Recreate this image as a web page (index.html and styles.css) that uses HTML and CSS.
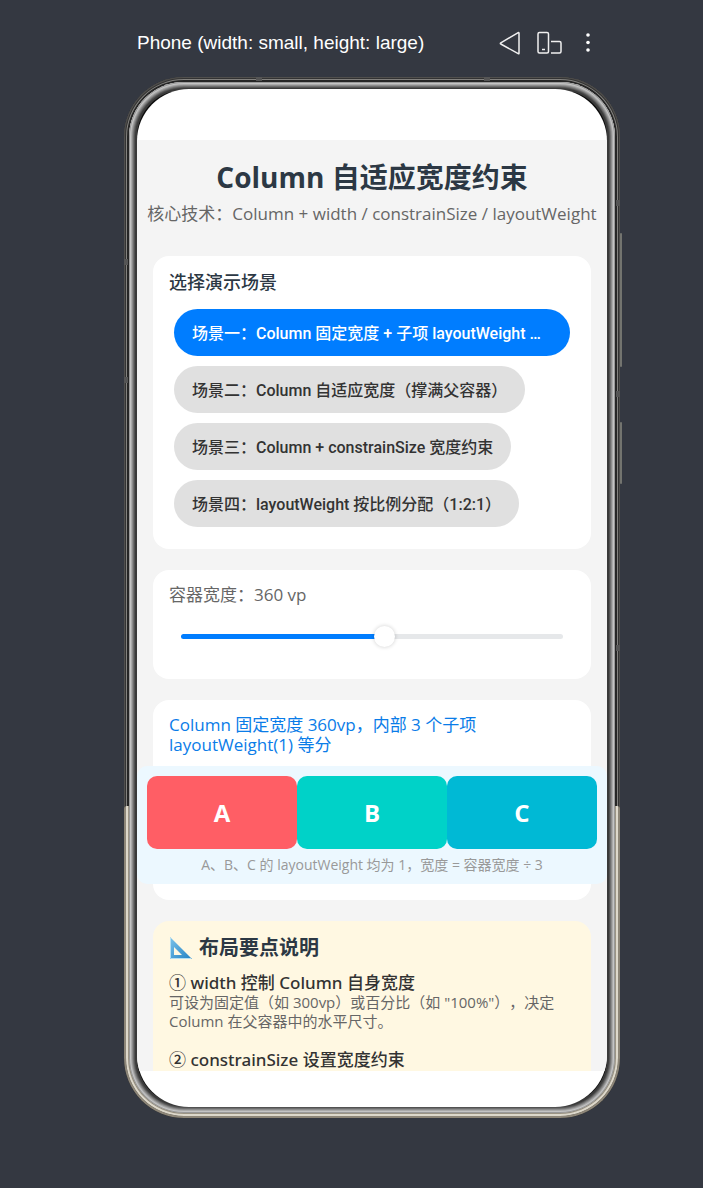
FILE: index.html
```
<!DOCTYPE html>
<html lang="zh-CN">
<head>
    <meta charset="UTF-8">
    <meta name="viewport" content="width=device-width, initial-scale=1.0">
    <title>Column 自适应宽度约束</title>
    <link rel="stylesheet" href="styles.css">
</head>
<body>
    <div class="previewer">
        <header class="toolbar">
            <span class="device-name">Phone (width: small, height: large)</span>
            <button type="button" class="tool" aria-label="Back">
                <svg width="22" height="24" viewBox="0 0 22 24"><path d="M20 2.200v20q0 .9-.8.5L1.800 13q-.9-.6 0-1.200L19.200 1.700q.8-.4.8.5z"/></svg>
            </button>
            <button type="button" class="tool" aria-label="Rotate">
                <svg width="26" height="24" viewBox="0 0 26 24"><rect x="1" y="1.500" width="10.500" height="20.500" rx="1.500"/><path d="M5 18.500h3M14 10.500h8.500q1.500 0 1.500 1.500v8.500q0 1.500-1.500 1.500H14"/></svg>
            </button>
            <button type="button" class="tool" aria-label="More">
                <svg class="dots" width="6" height="24" viewBox="0 0 6 24"><circle cx="3" cy="4" r="1.800"/><circle cx="3" cy="11.500" r="1.800"/><circle cx="3" cy="19" r="1.800"/></svg>
            </button>
        </header>

        <div class="phone">
            <span class="side-key volume"></span>
            <span class="side-key power"></span>
            <span class="antennas"></span>
            <div class="screen">
                <main class="app">
                    <h1>Column 自适应宽度约束</h1>
                    <p class="subtitle">核心技术：Column + width / constrainSize / layoutWeight</p>

                    <section class="card scenes">
                        <h2>选择演示场景</h2>
                        <div class="scene-list">
                            <button type="button" class="scene active">场景一：Column 固定宽度 + 子项 layoutWeight 等分宽度</button>
                            <button type="button" class="scene">场景二：Column 自适应宽度（撑满父容器）</button>
                            <button type="button" class="scene">场景三：Column + constrainSize 宽度约束</button>
                            <button type="button" class="scene">场景四：layoutWeight 按比例分配（1:2:1）</button>
                        </div>
                    </section>

                    <section class="card width-card">
                        <label for="boxWidth">容器宽度：360 vp</label>
                        <input type="range" id="boxWidth" min="200" max="500" value="360">
                    </section>

                    <section class="card demo">
                        <p class="demo-text">Column 固定宽度 360vp，内部 3 个子项 layoutWeight(1) 等分</p>
                        <div class="demo-box">
                            <div class="blocks">
                                <div class="block red">A</div>
                                <div class="block green">B</div>
                                <div class="block blue">C</div>
                            </div>
                            <p class="caption">A、B、C 的 layoutWeight 均为 1，宽度 = 容器宽度 ÷ 3</p>
                        </div>
                    </section>

                    <section class="card notes">
                        <h2>
                            <svg width="24" height="24" viewBox="0 0 24 24"><defs><linearGradient id="ruler" x1="0" y1="0" x2="1" y2="1"><stop offset="0" stop-color="#7cc3ea"/><stop offset="1" stop-color="#2382c4"/></linearGradient></defs><path fill="url(#ruler)" fill-rule="evenodd" d="M1 1v22h22zM5 11l8 8H5z"/><path stroke="#b5dff3" d="M1.500 2v20.500H22" fill="none"/></svg>
                            布局要点说明
                        </h2>
                        <h3>① width 控制 Column 自身宽度</h3>
                        <p>可设为固定值（如 300vp）或百分比（如 "100%"），决定 Column 在父容器中的水平尺寸。</p>
                        <h3>② constrainSize 设置宽度约束</h3>
                    </section>
                </main>
            </div>
        </div>
    </div>
</body>
</html>
```
FILE: styles.css
```
* {
    box-sizing: border-box;
}
body {
    margin: 0;
    height: 100vh;
    padding-left: 41px;
    background: #343841;
    font-family: "Open Sans", "Noto Sans CJK SC", sans-serif;
    text-spacing-trim: space-all;
    color: #333;
}
h1, h2, h3, p {
    margin: 0;
}
button {
    font-family: inherit;
    border: none;
    cursor: pointer;
}
.previewer {
    display: flex;
    flex-direction: column;
    height: 100%;
    max-width: 496px;
    margin: 0 auto;
    padding: 30px 0 70px;
}

/* Toolbar */
.toolbar {
    display: flex;
    align-items: center;
    height: 26px;
    margin-bottom: 21px;
    padding: 0 29px 0 13px;
    gap: 16px;
    color: #fff;
    font: 19px "Liberation Sans", Arial, sans-serif;
}
.device-name {
    flex: 1;
    white-space: nowrap;
}
.tool {
    display: flex;
    padding: 0;
    background: none;
}
.tool svg {
    fill: none;
    stroke: #f0f0f0;
    stroke-width: 1.5;
}
.tool:last-child {
    margin-left: 6px;
}
.tool .dots {
    fill: #fff;
    stroke: none;
}

/* Phone frame */
.phone {
    position: relative;
    flex: 1;
    min-height: 0;
    padding: 12px 13px 11px;
    border-radius: 60px;
    background: #0c0c0c;
    box-shadow: inset 0 0 0 1px #504f4d, inset 0 0 0 2px #333, inset 0 0 0 3px #83827f, inset 0 0 0 5px #262626;
}
.phone::before {
    content: "";
    position: absolute;
    inset: 5px;
    border-radius: 55px;
    box-shadow: inset 0 0 0 1px #999, inset 0 0 0 2px #c4c4c4, inset 0 0 0 3px #aaa, inset 0 0 0 4px #8c8c8c, inset 0 0 0 5px #6e6e6e, inset 0 0 0 6px #525252, inset 0 0 0 8px #3a3a3a;
}
.phone::after {
    content: "";
    position: absolute;
    inset: 726px 0 0;
    border: 2px solid #8d8678;
    border-top: none;
    border-radius: 0 0 60px 60px;
    box-shadow: inset 0 0 0 2px #ddd8cb, inset 0 0 0 3px #9b9484;
    clip-path: inset(3px 0 0 round 3px 3px 60px 60px);
}
.side-key {
    position: absolute;
    right: -2px;
    width: 2px;
    background: #73746f;
    border-radius: 1px;
}
.volume {
    top: 156px;
    height: 134px;
}
.power {
    top: 345px;
    height: 62px;
}
.antennas {
    position: absolute;
    inset: 0;
    background:
        linear-gradient(#555, #555) 132px 0 / 6px 4px,
        linear-gradient(#555, #555) 360px 0 / 6px 4px,
        linear-gradient(#555, #555) 0 182px / 4px 6px,
        linear-gradient(#555, #555) 0 300px / 4px 6px,
        linear-gradient(#555, #555) right 0 top 123px / 4px 6px,
        linear-gradient(#555, #555) right 0 top 314px / 4px 6px,
        linear-gradient(#555, #555) right 0 top 568px / 4px 6px;
    background-repeat: no-repeat;
}
.screen {
    position: relative;
    z-index: 1;
    display: flex;
    height: 100%;
    padding: 51px 0 36px;
    overflow: hidden;
    background: #fff;
    border-radius: 52px;
}

/* App page */
.app {
    flex: 1;
    min-width: 0;
    padding: 16px;
    background: #f4f4f4;
    overflow: hidden;
}
h1 {
    font-size: 28px;
    line-height: 42px;
    text-align: center;
    color: #2c3844;
}
.subtitle {
    margin: 0 -16px 26px;
    font-size: 17px;
    line-height: 32px;
    text-align: center;
    white-space: nowrap;
    color: #666;
}
.card {
    margin-bottom: 21px;
    padding: 16px;
    background: #fff;
    border-radius: 16px;
}
.scenes {
    padding-bottom: 22px;
}
.scenes h2 {
    margin-bottom: 16px;
    font-size: 18px;
    font-weight: 500;
    line-height: 21px;
    color: #2c3844;
}
.scene-list {
    display: flex;
    flex-direction: column;
    align-items: flex-start;
    gap: 10px;
    padding: 0 5px;
}
.scene {
    max-width: 100%;
    height: 47px;
    padding: 0 18px 2px;
    overflow: hidden;
    border-radius: 24px;
    background: #e0e0e0;
    color: #333;
    font-family: Roboto, "Noto Sans CJK SC", sans-serif;
    font-size: 16px;
    font-weight: 500;
    white-space: nowrap;
    text-overflow: ellipsis;
}
.scene.active {
    background: #007dff;
    color: #fff;
}

/* Width slider */
.width-card {
    height: 109px;
    padding-top: 15px;
}
.width-card label {
    display: block;
    margin-bottom: 21px;
    font-size: 17px;
    line-height: 20px;
    color: #666;
}
.width-card input {
    -webkit-appearance: none;
    appearance: none;
    display: block;
    width: calc(100% - 24px);
    height: 21px;
    margin: 0 12px;
    background: none;
}
.width-card input::-webkit-slider-runnable-track {
    height: 5px;
    border-radius: 3px;
    background: linear-gradient(to right, #007dff 53%, #e6e8ea 53%);
}
.width-card input::-webkit-slider-thumb {
    -webkit-appearance: none;
    width: 21px;
    height: 21px;
    margin-top: -8px;
    border-radius: 50%;
    background: #fff;
    box-shadow: 0 0 4px rgba(0,0,0,0.2);
}

/* Demo */
.demo {
    padding-top: 15px;
}
.demo-text {
    margin-bottom: 11px;
    font-size: 17px;
    line-height: 20px;
    color: #0a7ce8;
}
.demo-box {
    margin: 0 -32px;
    padding: 10px 10px 9px;
    background: #ecf8ff;
    border-radius: 10px;
}
.blocks {
    display: flex;
}
.block {
    flex: 1;
    border-radius: 10px;
    color: #fff;
    font-size: 24px;
    font-weight: bold;
    line-height: 73px;
    text-align: center;
}
.red {
    background: #ff5e65;
}
.green {
    background: #00d2c8;
}
.blue {
    background: #00b9d5;
}
.caption {
    margin-top: 6px;
    font-size: 14px;
    line-height: 20px;
    text-align: center;
    color: #999;
}

/* Notes */
.notes {
    margin-bottom: 0;
    padding-top: 15px;
    background: #fff8e2;
}
.notes h2 {
    display: flex;
    align-items: center;
    gap: 6px;
    margin-bottom: 12px;
    font-size: 20px;
    line-height: 22px;
    color: #2c3844;
}
.notes h3 {
    font-family: "Noto Sans", "Noto Sans CJK SC", sans-serif;
    font-size: 17px;
    font-weight: 500;
    line-height: 21px;
}
.notes p {
    margin-bottom: 18px;
    font-size: 15px;
    line-height: 19px;
    color: #666;
}
```
